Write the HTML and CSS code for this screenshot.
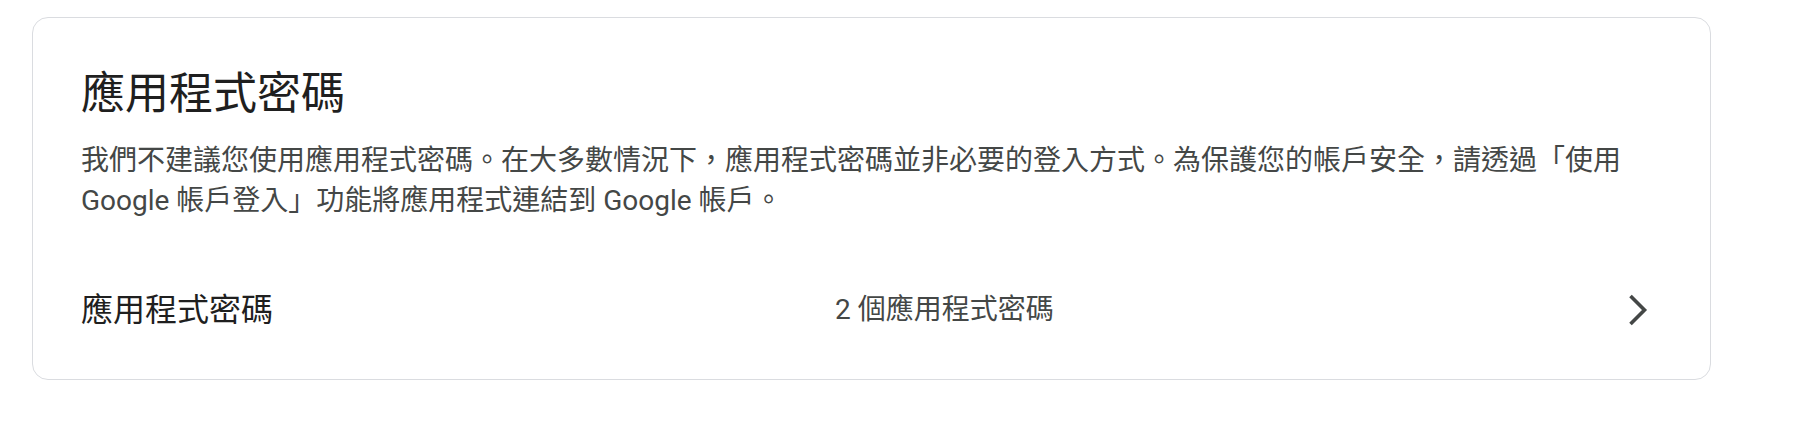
FILE: index.html
```html
<!DOCTYPE html>
<html lang="zh-Hant">
<head>
<meta charset="utf-8">
<link rel="stylesheet" href="styles.css">
<title>應用程式密碼</title>
</head>
<body>
<div class="page">
  <section class="card">
    <h1 class="title">應用程式密碼</h1>
    <p class="desc">我們不建議您使用應用程式密碼。在大多數情況下，應用程式密碼並非必要的登入方式。為保護您的帳戶安全，請透過「使用 Google 帳戶登入」功能將應用程式連結到 Google 帳戶。</p>
    <a class="row" href="#">
      <span class="row-label">應用程式密碼</span>
      <span class="row-value">2 個應用程式密碼</span>
      <span class="row-icon">
        <svg width="20" height="32" viewBox="0 0 20 32" aria-hidden="true"><polyline points="2.5,2 16.5,16 2.5,30" fill="none" stroke="#444746" stroke-width="3.6" stroke-linejoin="miter"/></svg>
      </span>
    </a>
  </section>
</div>
</body>
</html>
```

FILE: styles.css
```css
html, body {
  margin: 0;
  padding: 0;
  background: #ffffff;
}

body {
  font-family: Roboto, "Noto Sans CJK TC", "Noto Sans", sans-serif;
  color: #1f1f1f;
}

.page {
  padding: 17px 0 0 32px;
}

.card {
  box-sizing: border-box;
  width: 1679px;
  height: 363px;
  border: 1px solid #dadce0;
  border-radius: 16px;
  padding: 48px 48px 0 48px;
}

.title {
  margin: 0;
  font-size: 44px;
  line-height: 56px;
  font-weight: 400;
  color: #1f1f1f;
}

.desc {
  margin: 19px 0 0 0;
  font-size: 28px;
  line-height: 40px;
  color: #444746;
}

.row {
  display: flex;
  align-items: center;
  height: 80px;
  margin-top: 49px;
  text-decoration: none;
}

.row-label {
  flex: 0 0 754px;
  font-size: 32px;
  line-height: 48px;
  color: #1f1f1f;
}

.row-value {
  flex: 1 1 auto;
  font-size: 28px;
  line-height: 40px;
  color: #444746;
}

.row-icon {
  flex: 0 0 48px;
  height: 48px;
  display: flex;
  align-items: center;
  justify-content: center;
}
```
